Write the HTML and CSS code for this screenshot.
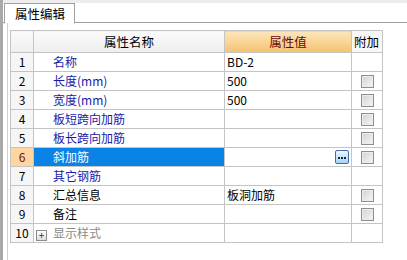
FILE: index.html
```html
<!DOCTYPE html>
<html lang="zh-CN">
<head>
    <meta charset="UTF-8">
    <title>属性编辑</title>
    <link rel="stylesheet" href="styles.css">
</head>
<body>

    <div class="frame">
        <div class="tabbar">
            <div class="tab">属性编辑</div>
        </div>

        <div class="panel">
            <table class="grid">
                <colgroup>
                    <col class="c_num">
                    <col class="c_name">
                    <col class="c_value">
                    <col class="c_extra">
                </colgroup>
                <tr class="head">
                    <th class="h_num"></th>
                    <th class="h_name">属性名称</th>
                    <th class="h_value">属性值</th>
                    <th class="h_extra">附加</th>
                </tr>
                <tr>
                    <td class="num">1</td>
                    <td class="name">名称</td>
                    <td class="value">BD-2</td>
                    <td class="extra"></td>
                </tr>
                <tr>
                    <td class="num">2</td>
                    <td class="name">长度(mm)</td>
                    <td class="value">500</td>
                    <td class="extra"><span class="check"></span></td>
                </tr>
                <tr>
                    <td class="num">3</td>
                    <td class="name">宽度(mm)</td>
                    <td class="value">500</td>
                    <td class="extra"><span class="check"></span></td>
                </tr>
                <tr>
                    <td class="num">4</td>
                    <td class="name">板短跨向加筋</td>
                    <td class="value"></td>
                    <td class="extra"><span class="check"></span></td>
                </tr>
                <tr>
                    <td class="num">5</td>
                    <td class="name">板长跨向加筋</td>
                    <td class="value"></td>
                    <td class="extra"><span class="check"></span></td>
                </tr>
                <tr class="selected">
                    <td class="num">6</td>
                    <td class="name">斜加筋</td>
                    <td class="value">
                        <div class="value_box">
                            <span class="more">
                                <svg width="12" height="12" viewBox="0 0 12 12">
                                    <rect x="2" y="6" width="2" height="2" fill="#14283f"/>
                                    <rect x="5" y="6" width="2" height="2" fill="#14283f"/>
                                    <rect x="8" y="6" width="2" height="2" fill="#14283f"/>
                                </svg>
                            </span>
                        </div>
                    </td>
                    <td class="extra"><span class="check"></span></td>
                </tr>
                <tr>
                    <td class="num">7</td>
                    <td class="name">其它钢筋</td>
                    <td class="value"></td>
                    <td class="extra"></td>
                </tr>
                <tr>
                    <td class="num">8</td>
                    <td class="name plain">汇总信息</td>
                    <td class="value">板洞加筋</td>
                    <td class="extra"><span class="check"></span></td>
                </tr>
                <tr>
                    <td class="num">9</td>
                    <td class="name plain">备注</td>
                    <td class="value"></td>
                    <td class="extra"><span class="check"></span></td>
                </tr>
                <tr>
                    <td class="num">10</td>
                    <td class="name group"><span class="plus">+</span>显示样式</td>
                    <td class="value"></td>
                    <td class="extra"></td>
                </tr>
            </table>
        </div>
    </div>

</body>
</html>
```

FILE: styles.css
```css
html, body {
    margin: 0;
    height: 100%;
    background: #ffffff;
}

body {
    font-family: "Noto Sans CJK SC", "Noto Sans", sans-serif;
    font-size: 12px;
    color: #000;
    overflow: hidden;
}

.frame {
    height: 100%;
    display: flex;
    flex-direction: column;
    border-left: 3px solid #a9a9a9;
    box-sizing: border-box;
}

.tabbar {
    height: 19px;
    padding-top: 3px;
    background: linear-gradient(#ededed 0, #ededed 3px, #ffffff 3px);
    border-bottom: 1px solid #a0a0a0;
    display: flex;
    flex-shrink: 0;
}

.tab {
    margin-left: 1px;
    height: 19px;
    padding: 0 9px 0 10px;
    line-height: 19px;
    font-size: 12.5px;
    background: #fff;
    border: 1px solid #a0a0a0;
    border-bottom: 1px solid #fff;
}

.panel {
    flex: 1;
    margin-left: 4px;
    border-left: 1px solid #cfcfcf;
    padding: 7px 0 0 2px;
}

.grid {
    border-collapse: collapse;
    table-layout: fixed;
    width: 372px;
}

.c_num { width: 23px; }
.c_name { width: 191px; }
.c_value { width: 127px; }
.c_extra { width: 31px; }

.grid th,
.grid td {
    border: 1px solid #c4c4c4;
    padding: 0;
    white-space: nowrap;
    overflow: hidden;
}

.grid th {
    height: 21px;
    font-weight: normal;
    font-size: 12.5px;
    background: linear-gradient(#fbfbfb, #eeeeee);
    text-align: center;
}

.grid .h_value {
    background: linear-gradient(#fde6bb, #f5c36f);
    color: #6b0a0a;
}

.grid .h_extra {
    background: #f7f7f7;
    text-align: left;
    padding-left: 2px;
}

.grid td {
    height: 18px;
    line-height: 18px;
}

.num {
    text-align: center;
    background: #f6f6f6;
}

.name {
    padding-left: 19px !important;
    color: #1a1aa6;
}

.name.plain {
    color: #000;
}

.name.group {
    padding-left: 2px !important;
    color: #8a8a8a;
}

.plus {
    display: inline-block;
    width: 9px;
    height: 9px;
    line-height: 8px;
    margin-right: 6px;
    border: 1px solid #8c8c8c;
    background: linear-gradient(#ffffff, #dedede);
    color: #333;
    font-size: 10px;
    text-align: center;
    vertical-align: -1px;
}

.value {
    padding-left: 2px !important;
}

.extra {
    text-align: center;
}

.check {
    display: inline-block;
    width: 11px;
    height: 11px;
    border: 1px solid #8e8e8e;
    background: linear-gradient(135deg, #d2d2d2, #f6f6f6);
    box-shadow: inset 0 0 0 1px #ececec;
    vertical-align: -2px;
}

.selected .num {
    background: #fdd6a2;
    color: #7a1010;
}

.selected .name {
    background: #0a83e6;
    color: #fff;
}

.value_box {
    display: flex;
    justify-content: flex-end;
    align-items: center;
    height: 18px;
    padding-right: 2px;
}

.more {
    display: flex;
    width: 12px;
    height: 12px;
    border: 1px solid #3c6ea8;
    border-radius: 2px;
    background: linear-gradient(#eef6ff, #a9d2f6);
}
```
